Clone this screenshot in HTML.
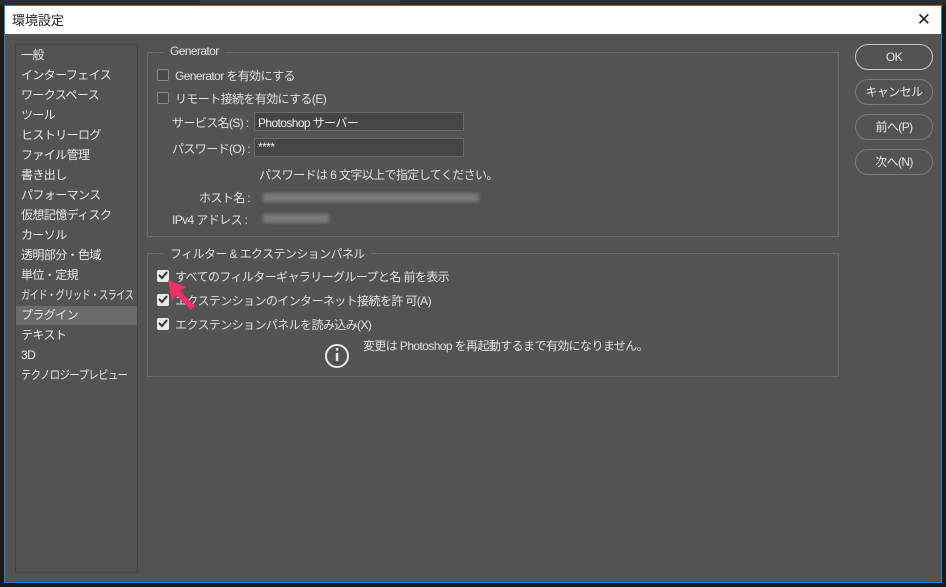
<!DOCTYPE html>
<html><head><meta charset="utf-8"><style>
*{margin:0;padding:0;box-sizing:border-box}
body{width:946px;height:587px;background:#1a1a1a;position:relative;overflow:hidden;font-family:"Liberation Sans","Noto Sans CJK JP",sans-serif;font-size:12px;letter-spacing:-0.6px;color:#e0e0e0}
.abs{position:absolute}
#win{left:4px;top:5px;width:938px;height:578px;border:1px solid #1e7fd6;background:#535353}
#title{left:0;top:0;width:936px;height:28px;background:#fff;color:#222;font-size:13px;letter-spacing:0;padding:4px 0 0 7px}
#close{right:10px;top:4px;color:#222;font-size:17px;font-weight:300}
#side{left:10px;top:38px;width:123px;height:529px;border:1px solid #454545;background:#535353}
.it{position:absolute;left:0;width:121px;height:19px;line-height:19px;padding-left:5px;color:#e8e8e8;white-space:nowrap}
.sel{background:#6b6b6b}
.grp{position:absolute;border:1px solid #6a6a6a}
.gl{position:absolute;top:-9px;left:16px;background:#535353;padding:0 6px;color:#e0e0e0;white-space:nowrap}
.cb{position:absolute;width:12px;height:12px;border:1px solid #8a8a8a;background:#4a4a4a;border-radius:2px}
.cbk{background:#e8e8e8;border-color:#e8e8e8}
.t{position:absolute;white-space:nowrap}
.inp{position:absolute;height:19px;background:#464646;border:1px solid #6a6a6a;padding:1px 3px;color:#eee}
.btn{position:absolute;left:850px;width:78px;height:26px;border:1px solid #7a7a7a;border-radius:13px;text-align:center;line-height:24px;color:#e8e8e8}
.blur{position:absolute;height:9px;background:#7a7a7a;filter:blur(1.5px)}
.sq{display:inline-block;transform-origin:left center}
</style></head><body>
<div class="abs" style="left:0;top:0;width:946px;height:5px;background:#2b2b2b"></div>
<div class="abs" style="left:200px;top:0;width:200px;height:4px;background:#3a3a3a"></div>
<div id="win" class="abs">
<div id="title" class="abs">環境設定<span id="close" class="abs">✕</span></div>
<div id="side" class="abs">
<div class="it" style="top:1px">一般</div>
<div class="it" style="top:21px">インターフェイス</div>
<div class="it" style="top:41px">ワークスペース</div>
<div class="it" style="top:61px">ツール</div>
<div class="it" style="top:81px">ヒストリーログ</div>
<div class="it" style="top:101px">ファイル管理</div>
<div class="it" style="top:121px">書き出し</div>
<div class="it" style="top:141px">パフォーマンス</div>
<div class="it" style="top:161px">仮想記憶ディスク</div>
<div class="it" style="top:181px">カーソル</div>
<div class="it" style="top:201px">透明部分・色域</div>
<div class="it" style="top:221px">単位・定規</div>
<div class="it" style="top:241px"><span class="sq" style="transform:scaleX(0.76)">ガイド・グリッド・スライス</span></div>
<div class="it sel" style="top:261px">プラグイン</div>
<div class="it" style="top:281px">テキスト</div>
<div class="it" style="top:301px">3D</div>
<div class="it" style="top:321px"><span class="sq" style="transform:scaleX(0.86)">テクノロジープレビュー</span></div>
</div>
<div class="grp" style="left:142px;top:46px;width:692px;height:185px"><span class="gl">Generator</span></div>
<div class="cb" style="left:152px;top:63px"></div><div class="t" style="left:170px;top:61px">Generator を有効にする</div>
<div class="cb" style="left:152px;top:86px"></div><div class="t" style="left:170px;top:84px">リモート接続を有効にする(E)</div>
<div class="t" style="left:167px;top:108px">サービス名(S) :</div>
<div class="inp" style="left:249px;top:106px;width:210px">Photoshop サーバー</div>
<div class="t" style="left:167px;top:134px">パスワード(O) :</div>
<div class="inp" style="left:249px;top:132px;width:210px">****</div>
<div class="t" style="left:254px;top:160px">パスワードは 6 文字以上で指定してください。</div>
<div class="t" style="left:194px;top:183px">ホスト名 :</div>
<div class="blur" style="left:258px;top:187px;width:216px"></div>
<div class="t" style="left:167px;top:205px">IPv4 アドレス :</div>
<div class="blur" style="left:258px;top:208px;width:66px"></div>
<div class="grp" style="left:142px;top:247px;width:692px;height:124px"><span class="gl">フィルター &amp; エクステンションパネル</span></div>
<div class="cb cbk" style="left:152px;top:264px"></div><div class="t" style="left:170px;top:262px">すべてのフィルターギャラリーグループと名 前を表示</div>
<div class="cb cbk" style="left:152px;top:288px"></div><div class="t" style="left:170px;top:286px">エクステンションのインターネット接続を許 可(A)</div>
<div class="cb cbk" style="left:152px;top:312px"></div><div class="t" style="left:170px;top:310px">エクステンションパネルを読み込み(X)</div>
<svg class="abs" style="left:146px;top:262px" width="210" height="110">
<path d="M8 7l3 3 5-6" stroke="#333" stroke-width="2" fill="none"/>
<path d="M8 31l3 3 5-6" stroke="#333" stroke-width="2" fill="none"/>
<path d="M8 55l3 3 5-6" stroke="#333" stroke-width="2" fill="none"/>
<path d="M17 12 L35 19 L29 23 L44 38 L40 42 L25 27 L21 33 Z" fill="#f0306a"/>
<circle cx="186" cy="88" r="11" stroke="#e8e8e8" stroke-width="2" fill="none"/>
<rect x="184.8" y="85" width="2.5" height="8" fill="#e8e8e8"/><rect x="184.8" y="80" width="2.5" height="2.5" fill="#e8e8e8"/>
</svg>
<div class="t" style="left:358px;top:331px">変更は Photoshop を再起動するまで有効になりません。</div>
<div class="btn" style="top:38px;border-color:#c8c8c8;border-width:1.5px">OK</div>
<div class="btn" style="top:73px">キャンセル</div>
<div class="btn" style="top:108px">前へ(P)</div>
<div class="btn" style="top:143px">次へ(N)</div>
</div>
</body></html>
